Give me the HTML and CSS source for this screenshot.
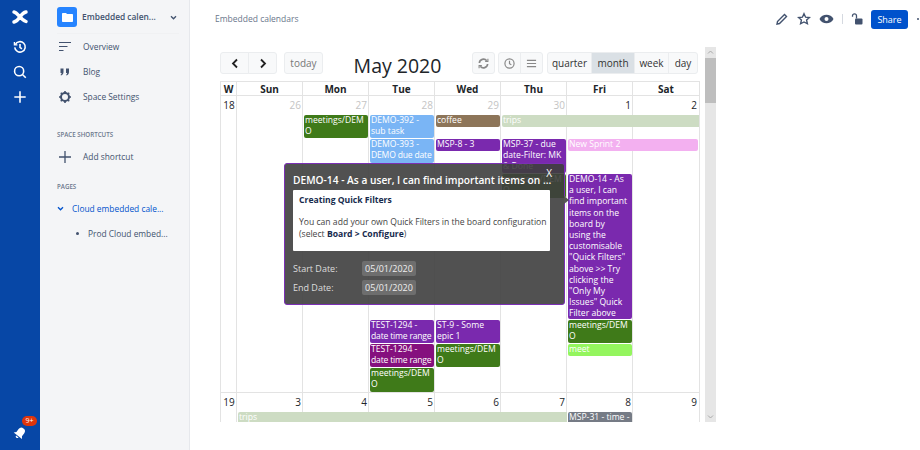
FILE: index.html
```html
<!DOCTYPE html>
<html lang="en">
<head>
    <meta charset="UTF-8">
    <title>Embedded calendars</title>
    <link rel="stylesheet" href="styles.css">
</head>
<body>
    <!-- Global nav -->
    <nav class="global-nav">
        <svg class="nav-logo" width="16" height="16" viewBox="0 0 16 16"><path d="M2 3c4 .5 6 7.500 12 9.500M14 3C8 4 8 11.500 2 13" fill="none" stroke="#fff" stroke-width="3.400" stroke-linecap="round"/></svg>
        <svg class="nav-icon" width="14" height="14" viewBox="0 0 16 16" fill="none" stroke="#fff" stroke-width="1.800"><path d="M2.600 5.200A6 6 0 1 1 2 8.400"/><path d="M1.600 2.200v3.400H5" stroke-width="1.500"/><path d="M8 4.500v4l2.200 1.600"/></svg>
        <svg class="nav-icon" width="14" height="14" viewBox="0 0 16 16" fill="none" stroke="#fff" stroke-width="1.800"><circle cx="7" cy="7" r="5.200"/><path d="M10.800 10.800l3.800 3.800"/></svg>
        <svg class="nav-icon" width="14" height="14" viewBox="0 0 16 16" fill="none" stroke="#fff" stroke-width="1.800"><path d="M8 1.500v13M1.500 8h13"/></svg>
        <div class="nav-bell">
            <svg width="14" height="14" viewBox="0 0 16 16" fill="#fff"><path transform="rotate(38 8 8)" d="M8 1.500a4 4 0 0 1 4 4v4l2 2.500H2l2-2.500v-4a4 4 0 0 1 4-4zM6.200 13h3.600a1.800 1.800 0 0 1-3.600 0z"/></svg>
            <span class="badge">9+</span>
        </div>
    </nav>

    <!-- Space sidebar -->
    <aside class="sidebar">
        <div class="space-head">
            <div class="space-icon">
                <svg width="11" height="9" viewBox="0 0 11 9" fill="#fff"><path d="M0 1c0-.6.4-1 1-1h3l1 1h5c.6 0 1 .4 1 1v6c0 .6-.4 1-1 1H1c-.6 0-1-.4-1-1z"/></svg>
            </div>
            <span class="space-name">Embedded calen...</span>
            <svg width="7" height="5" viewBox="0 0 8 6" fill="none" stroke="#42526e" stroke-width="1.600"><path d="M1 1.500l3 3 3-3"/></svg>
        </div>
        <a class="side-link">
            <svg width="14" height="14" viewBox="0 0 14 14" fill="none" stroke="#42526e" stroke-width="1.100"><path d="M1 2.500h12M1 6.500h8.500M1 10.500h4.500"/></svg>
            <span>Overview</span>
        </a>
        <a class="side-link">
            <svg width="14" height="14" viewBox="0 0 14 14" fill="#42526e"><path d="M2.500 3.500h3v3.500c0 2-1 3-2.500 3.500l-.4-.8c.7-.4 1-1 1-1.700H2.500zM8 3.500h3v3.500c0 2-1 3-2.500 3.500l-.4-.8c.7-.4 1-1 1-1.700H8z"/></svg>
            <span>Blog</span>
        </a>
        <a class="side-link">
            <svg width="14" height="14" viewBox="0 0 14 14" fill="none" stroke="#42526e"><circle cx="7" cy="7" r="4" stroke-width="2"/><path d="M7 1v2M7 11v2M1 7h2M11 7h2M2.800 2.800l1.400 1.400M9.800 9.800l1.400 1.400M2.800 11.200l1.400-1.400M9.800 4.200l1.400-1.400" stroke-width="1.600"/></svg>
            <span>Space Settings</span>
        </a>
        <h4 class="side-title shortcuts">SPACE SHORTCUTS</h4>
        <a class="side-link">
            <svg width="14" height="14" viewBox="0 0 14 14" fill="none" stroke="#42526e" stroke-width="1.300"><path d="M7 1v12M1 7h12"/></svg>
            <span>Add shortcut</span>
        </a>
        <h4 class="side-title pages">PAGES</h4>
        <div class="tree-row active">
            <svg width="7" height="5" viewBox="0 0 8 6" fill="none" stroke="#0052cc" stroke-width="1.600"><path d="M1 1.500l3 3 3-3"/></svg>
            <span>Cloud embedded cale...</span>
        </div>
        <div class="tree-row child">
            <i class="dot"></i>
            <span>Prod Cloud embed...</span>
        </div>
    </aside>

    <main class="main">
        <header class="topbar">
            <span class="crumb">Embedded calendars</span>
            <div class="actions">
                <svg width="14" height="14" viewBox="0 0 14 14" fill="none" stroke="#42526e" stroke-width="1.400"><path d="M2.500 9.500l7-7 2 2-7 7-2.500.5z"/></svg>
                <svg width="14" height="14" viewBox="0 0 14 14" fill="none" stroke="#42526e" stroke-width="1.400"><path d="M7 1.700l1.600 3.500 3.800.4-2.800 2.500.8 3.700L7 10l-3.400 1.800.8-3.700L1.600 5.600l3.800-.4z"/></svg>
                <svg width="15" height="14" viewBox="0 0 15 14"><path d="M.5 7C2 4 4.500 2.800 7.500 2.800S13 4 14.500 7C13 10 10.500 11.200 7.500 11.200S2 10 .5 7z" fill="#42526e"/><circle cx="7.500" cy="7" r="2" fill="#fff"/></svg>
                <i class="sep"></i>
                <svg width="12" height="14" viewBox="0 0 12 14"><rect x="4" y="6.500" width="7.500" height="6" rx="1" fill="#42526e"/><path d="M5.500 6.500V3.800a2 2 0 0 0-4 0v1" fill="none" stroke="#42526e" stroke-width="1.300"/></svg>
                <button class="share">Share</button>
                <i class="more"></i>
            </div>
        </header>

        <div class="content">
            <div class="calendar">
                <div class="toolbar">
                    <div class="btn-group">
                        <button class="tb-btn arrow">
                            <svg width="8" height="11" viewBox="0 0 8 11" fill="none" stroke="#222" stroke-width="1.800"><path d="M6 1.500L2 5.500l4 4"/></svg>
                        </button>
                        <button class="tb-btn arrow">
                            <svg width="8" height="11" viewBox="0 0 8 11" fill="none" stroke="#222" stroke-width="1.800"><path d="M2 1.500l4 4-4 4"/></svg>
                        </button>
                    </div>
                    <button class="tb-btn today">today</button>
                    <h2 class="cal-title">May 2020</h2>
                    <button class="tb-btn icon-btn refresh">
                        <svg width="11" height="11" viewBox="0 0 12 12" fill="none" stroke="#888" stroke-width="1.800"><path d="M1.500 5.500A4.500 4.500 0 0 1 9.500 3M10.500 6.500A4.500 4.500 0 0 1 2.500 9"/><path d="M10.800 .8v3H7.800M1.200 11.200v-3h3" stroke-width="1.200"/></svg>
                    </button>
                    <div class="btn-group">
                        <button class="tb-btn icon-btn">
                            <svg width="11" height="11" viewBox="0 0 12 12" fill="none" stroke="#888" stroke-width="1.300"><circle cx="6" cy="6" r="5"/><path d="M6 3v3.200l2 1.200"/></svg>
                        </button>
                        <button class="tb-btn icon-btn">
                            <svg width="11" height="11" viewBox="0 0 12 12" fill="none" stroke="#888" stroke-width="1.300"><path d="M1 2.500h10M1 6h10M1 9.500h10"/></svg>
                        </button>
                    </div>
                    <div class="btn-group views">
                        <button class="tb-btn view">quarter</button>
                        <button class="tb-btn view selected">month</button>
                        <button class="tb-btn view">week</button>
                        <button class="tb-btn view">day</button>
                    </div>
                </div>

                <div class="grid-box">
                    <div class="head-row">
                        <div>W</div><div>Sun</div><div>Mon</div><div>Tue</div><div>Wed</div><div>Thu</div><div>Fri</div><div>Sat</div>
                    </div>

                    <!-- week 18 -->
                    <div class="week week-18">
                        <div class="line c1"></div><div class="line c2"></div><div class="line c3"></div><div class="line c4"></div>
                        <div class="line c5"></div><div class="line c6"></div><div class="line c7"></div><div class="line c8"></div>

                        <div class="num wk c1">18</div>
                        <div class="num off c2">26</div>
                        <div class="num off c3">27</div>
                        <div class="num off c4">28</div>
                        <div class="num off c5">29</div>
                        <div class="num off c6">30</div>
                        <div class="num c7">1</div>
                        <div class="num c8">2</div>

                        <div class="ev green c3 r2">meetings/DEM<wbr>O</div>
                        <div class="ev blue c4 r2">DEMO-392 - sub task</div>
                        <div class="ev brown c5 r2 short">coffee</div>
                        <div class="ev trips c6 r2 short to-end">trips</div>

                        <div class="ev blue c4 r3 two">DEMO-393 - <span class="fit">DEMO due date</span></div>
                        <div class="ev purple c5 r3 short">MSP-8 - 3</div>
                        <div class="ev purple c6 r3">MSP-37 - due date-Filter: MK &amp; Done</div>
                        <div class="ev pink c7 r3 short to-end">New Sprint 2</div>

                        <div class="ev green c6 r4 two">meetings/DEM<wbr>O</div>
                        <div class="ev purple c7 r4 wide-text">DEMO-14 - As a user, I can find important items on the board by using the customisable "Quick Filters" above &gt;&gt; Try clicking the "Only My Issues" Quick Filter above</div>

                        <div class="ev purple c4 r5">TEST-1294 - <span class="fit">date time range</span></div>
                        <div class="ev purple c5 r5">ST-9 - Some epic 1</div>
                        <div class="ev green c7 r5">meetings/DEM<wbr>O</div>

                        <div class="ev magenta c4 r6">TEST-1294 - <span class="fit">date time range</span></div>
                        <div class="ev green c5 r6">meetings/DEM<wbr>O</div>
                        <div class="ev lime c7 r6 short">meet</div>

                        <div class="ev green c4 r7">meetings/DEM<wbr>O</div>
                    </div>

                    <!-- week 19 -->
                    <div class="week week-19">
                        <div class="line c1"></div><div class="line c2"></div><div class="line c3"></div><div class="line c4"></div>
                        <div class="line c5"></div><div class="line c6"></div><div class="line c7"></div><div class="line c8"></div>

                        <div class="num wk c1">19</div>
                        <div class="num c2">3</div>
                        <div class="num c3">4</div>
                        <div class="num c4">5</div>
                        <div class="num c5">6</div>
                        <div class="num c6">7</div>
                        <div class="num c7">8</div>
                        <div class="num c8">9</div>

                        <div class="ev trips c2 r2 span-5 short">trips</div>
                        <div class="ev grey c7 r2">MSP-31 - time - 3</div>
                    </div>
                </div>

                <!-- event popover -->
                <div class="popover">
                    <span class="pop-close">X</span>
                    <div class="pop-title">DEMO-14 - As a user, I can find important items on ...</div>
                    <div class="pop-body">
                        <strong>Creating Quick Filters</strong>
                        <p>You can add your own Quick Filters in the board configuration (select <b>Board &gt; Configure</b>)</p>
                    </div>
                    <div class="pop-date"><label>Start Date:</label><span>05/01/2020</span></div>
                    <div class="pop-date"><label>End Date:</label><span>05/01/2020</span></div>
                    <i class="pop-arrow"></i>
                </div>
            </div>

            <div class="scrollbar">
                <svg width="11" height="11" viewBox="0 0 11 11" fill="none" stroke="#aaa"><path d="M3 6.500l2.500-2.500 2.500 2.500"/></svg>
                <div class="thumb"></div>
                <svg class="down" width="11" height="11" viewBox="0 0 11 11" fill="none" stroke="#aaa"><path d="M3 4.500l2.500 2.500 2.500-2.500"/></svg>
            </div>
        </div>
    </main>
</body>
</html>
```

FILE: styles.css
```css
* {
    margin: 0;
    padding: 0;
    box-sizing: border-box;
}

body {
    font-family: "Open Sans", "Noto Sans", sans-serif;
    width: 920px;
    height: 450px;
    overflow: hidden;
    display: flex;
    background: #fff;
    color: #172b4d;
}

/* Global nav */
.global-nav {
    width: 40px;
    background: #0747a6;
    display: flex;
    flex-direction: column;
    align-items: center;
    padding-top: 9px;
}

.nav-logo {
    margin-bottom: 15px;
}

.nav-icon {
    margin-bottom: 11px;
}

.nav-bell {
    margin-top: auto;
    margin-bottom: 13px;
    position: relative;
    height: 14px;
}

.badge {
    position: absolute;
    left: 9px;
    top: -7px;
    width: 15px;
    height: 10px;
    border-radius: 5px;
    background: #de350b;
    color: #fff;
    font-size: 7px;
    line-height: 10px;
    text-align: center;
}

/* Sidebar */
.sidebar {
    width: 150px;
    background: #f4f5f7;
    border-right: 1px solid #e6e8ec;
    font-size: 8.400px;
    color: #42526e;
}

.space-head {
    height: 34px;
    margin: 0 10px 0 17px;
    padding-top: 7px;
    display: flex;
    align-items: flex-start;
    border-bottom: 1px solid #f0f1f3;
}

.space-icon {
    width: 20px;
    height: 20px;
    border-radius: 3px;
    background: #2684ff;
    display: flex;
    align-items: center;
    justify-content: center;
    flex-shrink: 0;
}

.space-name {
    font-weight: 600;
    margin-left: 5px;
    line-height: 20px;
    width: 88px;
    white-space: nowrap;
}

.space-head > svg {
    margin-top: 8px;
}

.side-link {
    height: 25px;
    display: flex;
    align-items: center;
    padding-left: 18px;
    gap: 11px;
}

.side-title {
    font-size: 6.200px;
    font-weight: 600;
    color: #6b778c;
    padding-left: 17px;
    line-height: 10px;
}

.shortcuts {
    margin-top: 21px;
    margin-bottom: 4px;
}

.pages {
    margin-top: 13px;
    margin-bottom: 4px;
}

.tree-row {
    height: 25px;
    display: flex;
    align-items: center;
    padding-left: 17px;
    gap: 8px;
    white-space: nowrap;
}

.tree-row.active {
    color: #0052cc;
}

.tree-row.child {
    padding-left: 36px;
    gap: 9px;
}

.dot {
    width: 3px;
    height: 3px;
    border-radius: 50%;
    background: #42526e;
}

/* Main */
.main {
    flex: 1;
    min-width: 0;
    display: flex;
    flex-direction: column;
}

.topbar {
    height: 47px;
    padding: 9px 0 0 25px;
    display: flex;
    justify-content: space-between;
    align-items: flex-start;
}

.crumb {
    font-size: 8.500px;
    color: #6b778c;
    line-height: 20px;
}

.actions {
    display: flex;
    align-items: center;
    height: 20px;
    gap: 8px;
}

.sep {
    width: 1px;
    height: 10px;
    background: #d5d9e0;
}

.share {
    width: 37px;
    height: 19px;
    border: none;
    border-radius: 3px;
    background: #0052cc;
    color: #fff;
    font: 9px "Open Sans", sans-serif;
}

.more {
    width: 2px;
    height: 2px;
    border-radius: 50%;
    background: #42526e;
    margin: 0 1px;
}

.content {
    display: flex;
    align-items: flex-start;
    padding-left: 30px;
    height: 375px;
}

/* Calendar */
.calendar {
    width: 480px;
    height: 375px;
    overflow: hidden;
    position: relative;
    padding-top: 5px;
}

.toolbar {
    display: flex;
    align-items: flex-start;
    height: 29px;
}

.btn-group {
    display: flex;
}

.tb-btn {
    height: 22px;
    background: #f8f9fa;
    border: 1px solid #ebedef;
    border-radius: 3px;
    font: 10px "Open Sans", sans-serif;
    color: #333;
    display: flex;
    align-items: center;
    justify-content: center;
}

.btn-group .tb-btn {
    border-radius: 0;
    margin-left: -1px;
}

.btn-group .tb-btn:first-child {
    border-radius: 3px 0 0 3px;
    margin-left: 0;
}

.btn-group .tb-btn:last-child {
    border-radius: 0 3px 3px 0;
}

.arrow {
    width: 29px;
}

.today {
    width: 39px;
    margin-left: 7px;
    color: #777;
}

.cal-title {
    font-size: 19.500px;
    font-weight: 400;
    color: #212529;
    width: 149px;
    text-align: center;
    line-height: 28px;
}

.icon-btn {
    width: 23px;
}

.refresh {
    margin-right: 3px;
}

.views {
    margin-left: 4px;
}

.view {
    width: 45px;
}

.view.selected {
    width: 44px;
    background: #dae0e5;
}

.view:nth-child(3) {
    width: 35px;
}

.view:last-child {
    width: 30px;
}

.grid-box {
    border: 1px solid #e3e3e3;
    border-bottom: none;
    width: 480px;
}

.head-row {
    display: grid;
    grid-template-columns: 16px repeat(7, 1fr);
    height: 14px;
    border-bottom: 1px solid #e3e3e3;
    font-size: 10px;
    font-weight: 700;
    line-height: 14px;
    text-align: center;
    color: #212529;
}

.head-row div {
    border-right: 1px solid #e3e3e3;
}

.head-row div:last-child {
    border-right: none;
}

.week {
    display: grid;
    grid-template-columns: 16px repeat(7, 1fr);
    border-bottom: 1px solid #e3e3e3;
}

.week-18 {
    grid-template-rows: 18px 24px 35px 146px 24px 24px 25px;
    height: 297px;
}

.week-19 {
    grid-template-rows: 18px 40px;
}

.line {
    grid-row: 1 / -1;
    border-right: 1px solid #e3e3e3;
}

.line.c8 {
    border-right: none;
}

.c1 { grid-column: 1; }
.c2 { grid-column: 2; }
.c3 { grid-column: 3; }
.c4 { grid-column: 4; }
.c5 { grid-column: 5; }
.c6 { grid-column: 6; }
.c7 { grid-column: 7; }
.c8 { grid-column: 8; }

.r2 { grid-row: 2; }
.r3 { grid-row: 3; }
.r4 { grid-row: 4; }
.r5 { grid-row: 5; }
.r6 { grid-row: 6; }
.r7 { grid-row: 7; }

.to-end { grid-column-end: 9; }
.span-5 { grid-column-end: 7; }

.num {
    grid-row: 1;
    font-size: 10px;
    line-height: 18px;
    text-align: right;
    padding-right: 2px;
    color: #212529;
}

.num.off {
    color: #c4c4c4;
}

.num.wk {
    text-align: center;
    padding-right: 0;
}

.ev {
    font-size: 8.600px;
    line-height: 11.200px;
    color: #fff;
    margin: 1px 1px 0 1px;
    padding-left: 1px;
    border-radius: 2px;
    overflow: hidden;
}

.ev.short {
    height: 12px;
}

.ev.two {
    height: 24px;
}

.ev .fit {
    white-space: nowrap;
    letter-spacing: -0.2px;
}

.ev.wide-text {
    padding-right: 4px;
}

.green { background: #3f7a19; }
.blue { background: #7ab5f5; }
.brown { background: #8d7559; }
.purple { background: #7a29ae; }
.pink { background: #f3b0f0; }
.magenta { background: #85107e; }
.lime { background: #94f55e; }
.grey { background: #757b85; }
.trips { background: #cddcc3; border-radius: 2px 0 0 2px; margin-right: 0; }

/* Popover */
.popover {
    position: absolute;
    left: 64px;
    top: 116px;
    width: 281px;
    height: 142px;
    background: rgba(62, 62, 62, 0.9);
    border: 1px solid #7b2fb5;
    border-radius: 3px;
    color: #fff;
    padding: 8px 8px 0;
}

.pop-close {
    position: absolute;
    right: 12px;
    top: 2px;
    font-size: 10px;
}

.pop-title {
    font-size: 10.200px;
    font-weight: 600;
    line-height: 16px;
    white-space: nowrap;
    margin-bottom: 2px;
}

.pop-body {
    background: #fff;
    color: #444;
    width: 257px;
    height: 61px;
    padding: 4px 1px 4px 6px;
    border-radius: 1px;
    font-size: 8.600px;
    line-height: 12px;
    margin-bottom: 8px;
}

.pop-body strong {
    display: block;
    color: #172b4d;
    margin-bottom: 10px;
}

.pop-body b {
    color: #172b4d;
}

.pop-date {
    display: flex;
    align-items: center;
    height: 19px;
    font-size: 9px;
    color: #ddd;
}

.pop-date label {
    width: 69px;
}

.pop-date span {
    width: 54px;
    height: 15px;
    line-height: 15px;
    background: #6e6e6e;
    border-radius: 2px;
    text-align: center;
    color: #eee;
}

.pop-arrow {
    position: absolute;
    right: -5px;
    top: 32px;
    width: 0;
    height: 0;
    border-top: 4px solid transparent;
    border-bottom: 4px solid transparent;
    border-left: 5px solid #555;
}

/* Page scrollbar */
.scrollbar {
    width: 11px;
    height: 375px;
    margin-left: 5px;
    background: #e6e6e6;
    position: relative;
}

.scrollbar svg {
    display: block;
}

.thumb {
    height: 45px;
    background: #bebebe;
}

.scrollbar .down {
    position: absolute;
    bottom: 0;
}
```
